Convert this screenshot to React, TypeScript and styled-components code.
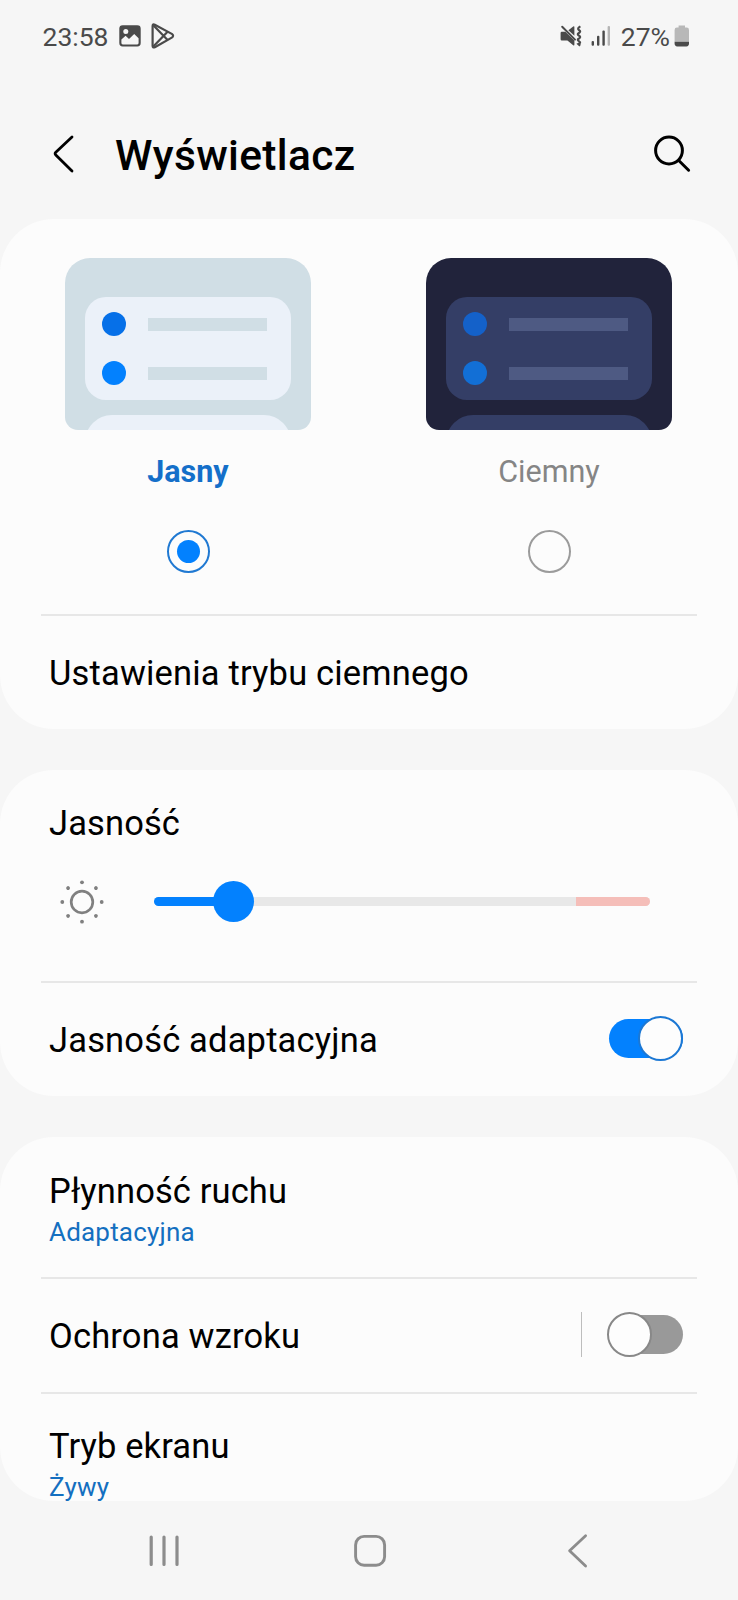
import React, { useState } from "react";
import styled, { createGlobalStyle } from "styled-components";

const GlobalStyle = createGlobalStyle`
  *, *::before, *::after { box-sizing: border-box; }
  body {
    margin: 0;
    background: #f6f6f6;
    font-family: Roboto, "Noto Sans", sans-serif;
    color: #000;
  }
  button { all: unset; box-sizing: border-box; cursor: pointer; }
  svg { display: block; flex: none; }
`;

const Screen = styled.div`
  width: 738px;
  height: 1600px;
  display: flex;
  flex-direction: column;
  overflow: hidden;
  background: #f6f6f6;
`;

const StatusBar = styled.div`
  height: 88px;
  padding: 18px 48px 34px 42.5px;
  display: flex;
  align-items: center;
  justify-content: space-between;
  color: #4a4a4a;
`;

const StatusGroup = styled.div<{ $gap: number }>`
  display: flex;
  align-items: center;
  gap: ${(p) => p.$gap}px;
`;

const StatusText = styled.span`
  padding-top: 1px;
  font-size: 26.5px;
  line-height: 36px;
  white-space: nowrap;
`;

const BatteryStatus = styled.div`
  display: flex;
  align-items: center;
  gap: 4px;
`;

const Header = styled.header`
  height: 131px;
  padding: 0 44px 0 48px;
  display: flex;
  align-items: center;
`;

const IconButton = styled.button`
  display: flex;
`;

const Title = styled.h1`
  flex: 1;
  margin: 4px 0 0 35px;
  font-size: 42.5px;
  line-height: 56px;
  font-weight: 500;
  letter-spacing: 0.35px;
`;

const Content = styled.main`
  height: 1282px;
  display: flex;
  flex-direction: column;
  gap: 41px;
`;

const Card = styled.section<{ $height: number }>`
  height: ${(p) => p.$height}px;
  flex: none;
  border-radius: 54px;
  background: #fcfcfc;
  overflow: hidden;
`;

const Divider = styled.hr`
  height: 2px;
  margin: 0 41px;
  border: 0;
  background: #e7e7e7;
`;

const ThemePicker = styled.div`
  height: 395px;
  padding: 39px 66px 0 65px;
  display: flex;
  justify-content: space-between;
`;

const ThemeOption = styled.button`
  width: 246px;
  display: flex;
  flex-direction: column;
  align-items: center;
`;

const Preview = styled.div<{ $dark: boolean }>`
  width: 246px;
  height: 172px;
  padding: 39px 20px 0;
  border-radius: 25px 25px 13px 13px;
  background: ${(p) => (p.$dark ? "#21233b" : "#d0dee5")};
  overflow: hidden;
  display: flex;
  flex-direction: column;
  gap: 15px;
`;

const PreviewPanel = styled.div<{ $dark: boolean; $radius: number }>`
  height: 103px;
  flex: none;
  padding: 15px 24px 15px 16.5px;
  border-radius: ${(p) => p.$radius}px;
  background: ${(p) => (p.$dark ? "#343e66" : "#ebf1f9")};
  display: flex;
  flex-direction: column;
  justify-content: space-between;
`;

const PreviewRow = styled.div`
  display: flex;
  align-items: center;
  gap: 22.5px;
`;

const PreviewDot = styled.i<{ $color: string }>`
  width: 24px;
  height: 24px;
  border-radius: 50%;
  background: ${(p) => p.$color};
`;

const PreviewLine = styled.i<{ $dark: boolean }>`
  flex: 1;
  height: 13px;
  background: ${(p) => (p.$dark ? "#4e5a83" : "#d0dee5")};
`;

const ThemeLabel = styled.span<{ $active: boolean }>`
  margin-top: 20px;
  font-size: 30.5px;
  line-height: 44px;
  font-weight: ${(p) => (p.$active ? 700 : 400)};
  color: ${(p) => (p.$active ? "#146fc9" : "#858585")};
`;

const Radio = styled.i<{ $active: boolean }>`
  width: 43px;
  height: 43px;
  margin-top: 36px;
  border-radius: 50%;
  border: 2px solid ${(p) => (p.$active ? "#2079d2" : "#9b9b9b")};
  display: flex;
  align-items: center;
  justify-content: center;

  &::after {
    content: "";
    width: 23px;
    height: 23px;
    border-radius: 50%;
    background: ${(p) => (p.$active ? "#0381fe" : "transparent")};
  }
`;

const Row = styled.div`
  height: 113px;
  padding: 0 55px 0 49px;
  display: flex;
  align-items: center;
`;

const RowLabel = styled.span`
  flex: 1;
  font-size: 34.5px;
  line-height: 46px;
  letter-spacing: 0.17px;
`;

const StackedRow = styled.div<{ $height: number; $top: number }>`
  height: ${(p) => p.$height}px;
  padding: ${(p) => p.$top}px 49px 0;
  display: flex;
  flex-direction: column;
`;

const StackedTitle = styled.span`
  font-size: 34.5px;
  line-height: 46px;
  letter-spacing: 0.12px;
`;

const StackedValue = styled.span`
  padding-top: 3px;
  font-size: 26px;
  line-height: 30px;
  letter-spacing: 0.2px;
  color: #146fc0;
`;

const BrightnessRow = styled.div`
  height: 135px;
  padding: 34px 88px 0 60px;
  display: flex;
  align-items: flex-start;
  gap: 50px;
`;

const Slider = styled.div`
  position: relative;
  flex: 1;
  height: 43px;
  display: flex;
  align-items: center;
`;

const SliderTrack = styled.div`
  flex: 1;
  height: 9px;
  border-radius: 5px;
  overflow: hidden;
  display: flex;
  background: #e8e8e8;
  justify-content: space-between;
`;

const SliderFill = styled.i`
  background: #0381fe;
`;

const SliderLimit = styled.i`
  width: 74.5px;
  background: #f5beb9;
`;

const SliderThumb = styled.i`
  position: absolute;
  top: 1px;
  width: 41px;
  height: 41px;
  margin-left: -20.5px;
  border-radius: 50%;
  background: #0381fe;
`;

const SwitchBox = styled.button<{ $on: boolean }>`
  position: relative;
  width: 76px;
  height: 45px;
  margin-bottom: 2px;
  padding: 3px 0 3px 2px;
  display: flex;

  &::before {
    content: "";
    flex: 1;
    height: 39px;
    border-radius: 20px;
    background: ${(p) => (p.$on ? "#0381fe" : "#999")};
  }

  &::after {
    content: "";
    position: absolute;
    top: 0;
    left: ${(p) => (p.$on ? "31px" : "0")};
    width: 45px;
    height: 45px;
    border-radius: 50%;
    border: 2px solid ${(p) => (p.$on ? "#1c78d4" : "#888")};
    background: #fdfdfd;
  }
`;

const SwitchSeparator = styled.i`
  width: 1px;
  height: 45px;
  margin: 0 25px 2px 0;
  background: #bdbdbd;
`;

const NavBar = styled.nav`
  flex: 1;
  padding: 0 148px 0 147px;
  display: grid;
  grid-template-columns: 205px 1fr auto;
  align-items: center;
`;

function Switch({ initial }: { initial: boolean }) {
  const [on, setOn] = useState(initial);
  return <SwitchBox $on={on} role="switch" aria-checked={on} onClick={() => setOn(!on)} />;
}

const ImageIcon = () => (
  <svg width="22" height="22" viewBox="0 0 22 22">
    <rect x="0.3" y="0.3" width="21.4" height="21.2" rx="3.4" fill="#4a4a4a" />
    <path d="M2.4 14.5 L6.6 10.8 L10 14 L15.2 9 L19.6 13.2 V18 Q19.6 19.4 18.2 19.4 H3.8 Q2.4 19.4 2.4 18 Z" fill="#f6f6f6" />
    <circle cx="6.8" cy="6.6" r="2.5" fill="#f6f6f6" />
  </svg>
);

const PlayIcon = () => (
  <svg width="24" height="26" viewBox="0 0 24 26" fill="none" stroke="#4a4a4a" strokeWidth="2.2" strokeLinejoin="round">
    <path d="M1.6 3 Q1.6 0.7 3.8 1.7 L20.8 10.9 Q23.4 12.8 20.8 14.6 L3.8 24.2 Q1.6 25 1.6 22.8 Z" />
    <path d="M2.3 2.3 L16.6 17 M2.3 23.5 L16.6 8.8" />
  </svg>
);

const MuteIcon = () => (
  <svg width="22" height="22" viewBox="0 0 22 22">
    <path d="M0.6 8 Q0.6 6.8 1.8 6.8 H5.4 L14.4 15.6 V19.6 Q14.4 21 13.2 20.2 L7.4 15.4 H1.8 Q0.6 15.4 0.6 14.2 Z" fill="#4a4a4a" />
    <path d="M8.4 5.2 L13.2 1.4 Q14.4 0.8 14.4 2 V10.8 Z" fill="#4a4a4a" />
    <path d="M2.2 1.8 L15 14.6" stroke="#4a4a4a" strokeWidth="2" strokeLinecap="round" />
    <path d="M20.4 1.4 Q16.6 3.6 19.2 5.2 Q21.4 6.6 18.6 8.2 Q16.8 9.4 19.2 10.8 Q21.4 12 18.6 13.8 Q16.8 15 19.2 16.4 Q21.4 17.6 18.4 19 L20.2 20.6" fill="none" stroke="#4a4a4a" strokeWidth="2.2" />
  </svg>
);

const SignalIcon = () => (
  <svg width="20" height="22" viewBox="0 0 20 22" fill="#4a4a4a">
    <rect x="0.6" y="16" width="2.4" height="4.8" rx="1" />
    <rect x="6" y="10.8" width="2.4" height="10" rx="1" />
    <rect x="11.4" y="5.4" width="2.4" height="15.4" rx="1" />
    <rect x="16.6" y="1" width="2.4" height="19.8" rx="1" fill="#b5b5b5" />
  </svg>
);

const BatteryIcon = () => (
  <svg width="16" height="22" viewBox="0 0 16 22">
    <path d="M4.6 0.6 H11 V2.6 H12.6 Q15 2.6 15 5 V16.8 H0.6 V5 Q0.6 2.6 3 2.6 H4.6 Z" fill="#b8b8b8" />
    <path d="M0.6 16.8 H15 V18.6 Q15 21.4 12.4 21.4 H3.2 Q0.6 21.4 0.6 18.6 Z" fill="#4a4a4a" />
  </svg>
);

const BackIcon = () => (
  <svg width="32" height="44" viewBox="0 0 32 44" fill="none" stroke="#000" strokeWidth="2.8" strokeLinecap="round" strokeLinejoin="round">
    <path d="M24 5 L7.8 20.2 Q6.4 21.5 7.8 22.9 L24 39" />
  </svg>
);

const SearchIcon = () => (
  <svg width="44" height="44" viewBox="0 0 44 44" fill="none" stroke="#000" strokeWidth="3" strokeLinecap="round">
    <circle cx="19" cy="18.5" r="13.4" />
    <path d="M29 28.8 L38.6 38.2" />
  </svg>
);

const SunIcon = () => (
  <svg width="44" height="44" viewBox="0 0 44 44">
    <circle cx="22" cy="22" r="10.8" fill="none" stroke="#808080" strokeWidth="2.7" />
    {[0, 45, 90, 135, 180, 225, 270, 315].map((a) => (
      <circle key={a} cx="22" cy="2.3" r="1.9" fill="#808080" transform={`rotate(${a} 22 22)`} />
    ))}
  </svg>
);

const RecentsIcon = () => (
  <svg width="34" height="36" viewBox="0 0 34 36" stroke="#8c8c8c" strokeWidth="3.2" strokeLinecap="round">
    <path d="M4.2 4 V31.4 M17 4 V31.4 M30 4 V31.4" />
  </svg>
);

const HomeIcon = () => (
  <svg width="36" height="36" viewBox="0 0 36 36" fill="none" stroke="#8c8c8c" strokeWidth="2.9">
    <rect x="3.6" y="3.4" width="29" height="28.8" rx="8.5" />
  </svg>
);

const NavBackIcon = () => (
  <svg width="24" height="36" viewBox="0 0 24 36" fill="none" stroke="#8c8c8c" strokeWidth="2.8" strokeLinecap="round" strokeLinejoin="round">
    <path d="M19.6 2.8 L3.6 17.8 L19.6 33" />
  </svg>
);

type ThemeName = "light" | "dark";

const THEMES: { id: ThemeName; label: string; dots: string[] }[] = [
  { id: "light", label: "Jasny", dots: ["#0670e8", "#0381fe"] },
  { id: "dark", label: "Ciemny", dots: ["#1461c9", "#126fd6"] },
];

export default function App() {
  const [theme, setTheme] = useState<ThemeName>("light");
  const brightness = 16;

  return (
    <>
      <GlobalStyle />
      <Screen>
        <StatusBar>
          <StatusGroup $gap={10}>
            <StatusText>23:58</StatusText>
            <ImageIcon />
            <PlayIcon />
          </StatusGroup>
          <StatusGroup $gap={9.5}>
            <MuteIcon />
            <SignalIcon />
            <BatteryStatus>
              <StatusText>27%</StatusText>
              <BatteryIcon />
            </BatteryStatus>
          </StatusGroup>
        </StatusBar>

        <Header>
          <IconButton aria-label="Wstecz"><BackIcon /></IconButton>
          <Title>Wyświetlacz</Title>
          <IconButton aria-label="Szukaj"><SearchIcon /></IconButton>
        </Header>

        <Content>
          <Card $height={510}>
            <ThemePicker>
              {THEMES.map(({ id, label, dots }) => (
                <ThemeOption key={id} onClick={() => setTheme(id)}>
                  <Preview $dark={id === "dark"}>
                    <PreviewPanel $dark={id === "dark"} $radius={21}>
                      {dots.map((color) => (
                        <PreviewRow key={color}>
                          <PreviewDot $color={color} />
                          <PreviewLine $dark={id === "dark"} />
                        </PreviewRow>
                      ))}
                    </PreviewPanel>
                    <PreviewPanel $dark={id === "dark"} $radius={27} />
                  </Preview>
                  <ThemeLabel $active={theme === id}>{label}</ThemeLabel>
                  <Radio $active={theme === id} />
                </ThemeOption>
              ))}
            </ThemePicker>
            <Divider />
            <Row><RowLabel>Ustawienia trybu ciemnego</RowLabel></Row>
          </Card>

          <Card $height={326}>
            <StackedRow $height={76} $top={30}><StackedTitle>Jasność</StackedTitle></StackedRow>
            <BrightnessRow>
              <SunIcon />
              <Slider>
                <SliderTrack>
                  <SliderFill style={{ width: `${brightness}%` }} />
                  <SliderLimit />
                </SliderTrack>
                <SliderThumb style={{ left: `${brightness}%` }} />
              </Slider>
            </BrightnessRow>
            <Divider />
            <Row>
              <RowLabel>Jasność adaptacyjna</RowLabel>
              <Switch initial={true} />
            </Row>
          </Card>

          <Card $height={364}>
            <StackedRow $height={140} $top={31}>
              <StackedTitle>Płynność ruchu</StackedTitle>
              <StackedValue>Adaptacyjna</StackedValue>
            </StackedRow>
            <Divider />
            <Row>
              <RowLabel>Ochrona wzroku</RowLabel>
              <SwitchSeparator />
              <Switch initial={false} />
            </Row>
            <Divider />
            <StackedRow $height={107} $top={29}>
              <StackedTitle>Tryb ekranu</StackedTitle>
              <StackedValue>Żywy</StackedValue>
            </StackedRow>
          </Card>
        </Content>

        <NavBar>
          <IconButton aria-label="Ostatnie"><RecentsIcon /></IconButton>
          <IconButton aria-label="Ekran główny"><HomeIcon /></IconButton>
          <IconButton aria-label="Cofnij"><NavBackIcon /></IconButton>
        </NavBar>
      </Screen>
    </>
  );
}
